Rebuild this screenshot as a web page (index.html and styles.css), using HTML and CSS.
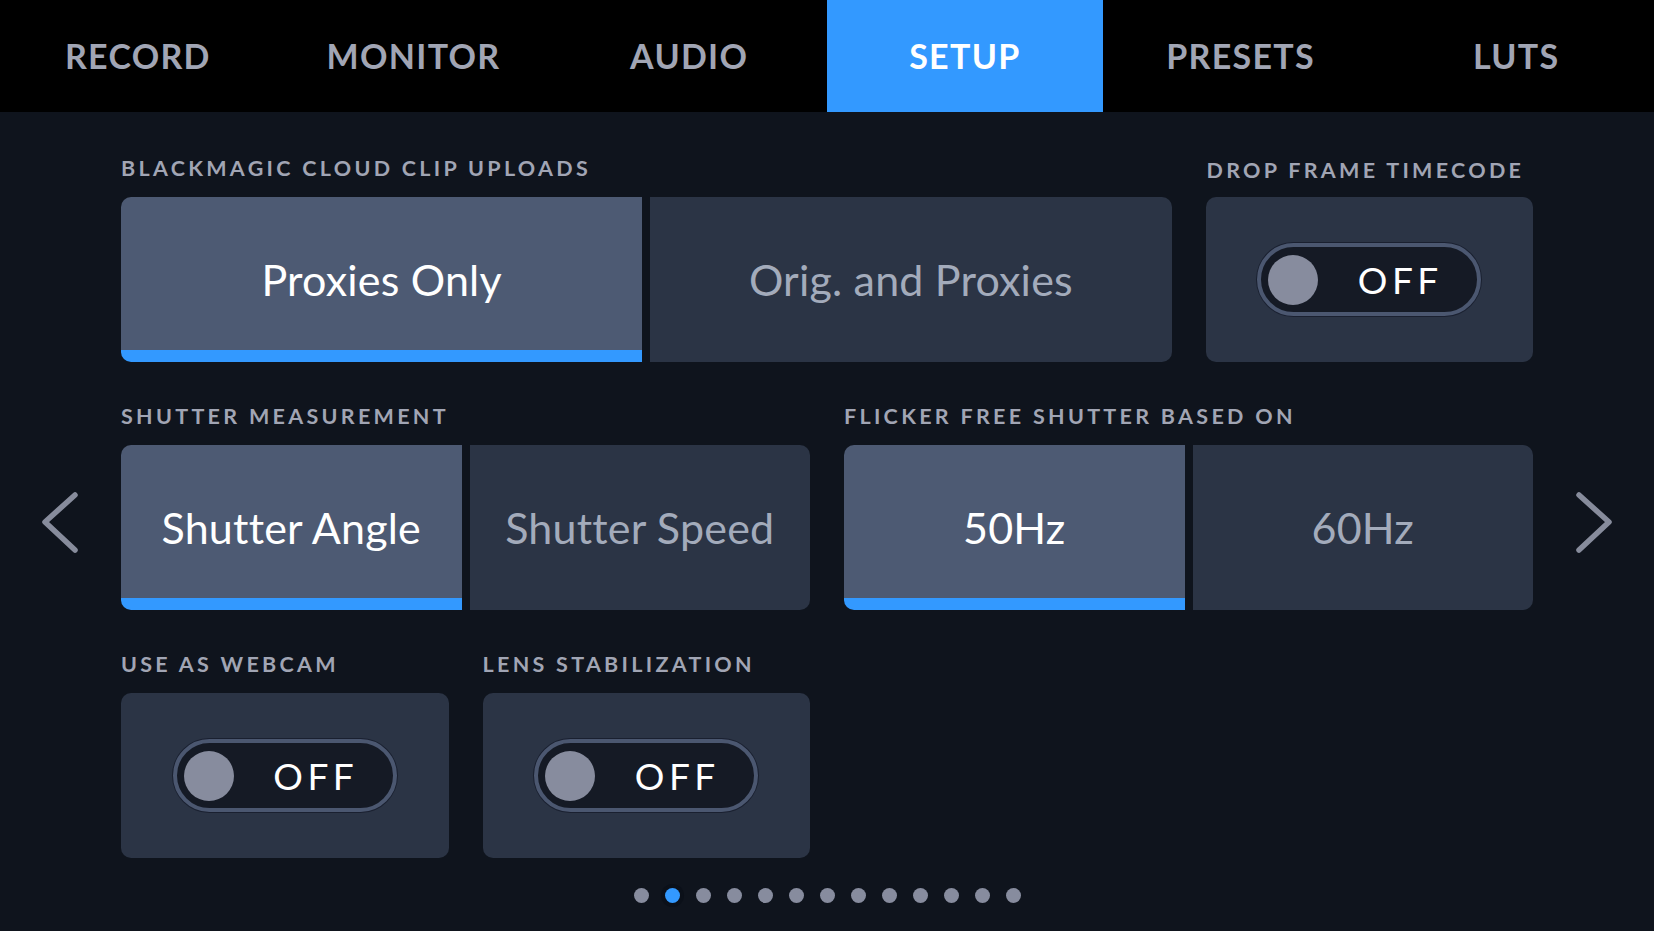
FILE: index.html
```html
<!DOCTYPE html>
<html>
<head>
<meta charset="utf-8">
<link rel="stylesheet" href="styles.css">
</head>
<body>
<header class="tabs">
  <div class="tab">RECORD</div>
  <div class="tab">MONITOR</div>
  <div class="tab">AUDIO</div>
  <div class="tab active">SETUP</div>
  <div class="tab">PRESETS</div>
  <div class="tab">LUTS</div>
</header>
<main class="main">
  <div class="nav nav-left">
    <svg width="40" height="65" viewBox="0 0 40 65"><path d="M35 5 L5 32 L35 60" fill="none" stroke="#878c9c" stroke-width="5.5" stroke-linecap="round" stroke-linejoin="round"/></svg>
  </div>
  <div class="grid">
    <section class="field span3">
      <div class="label">BLACKMAGIC CLOUD CLIP UPLOADS</div>
      <div class="seg">
        <div class="opt sel">Proxies Only</div>
        <div class="opt">Orig. and Proxies</div>
      </div>
    </section>
    <section class="field">
      <div class="label label-r">DROP FRAME TIMECODE</div>
      <div class="card">
        <div class="toggle"><span class="knob"></span><span class="tlabel">OFF</span></div>
      </div>
    </section>
    <section class="field span2">
      <div class="label">SHUTTER MEASUREMENT</div>
      <div class="seg">
        <div class="opt sel">Shutter Angle</div>
        <div class="opt">Shutter Speed</div>
      </div>
    </section>
    <section class="field span2">
      <div class="label">FLICKER FREE SHUTTER BASED ON</div>
      <div class="seg">
        <div class="opt sel">50Hz</div>
        <div class="opt">60Hz</div>
      </div>
    </section>
    <section class="field">
      <div class="label">USE AS WEBCAM</div>
      <div class="card">
        <div class="toggle"><span class="knob"></span><span class="tlabel">OFF</span></div>
      </div>
    </section>
    <section class="field">
      <div class="label">LENS STABILIZATION</div>
      <div class="card">
        <div class="toggle"><span class="knob"></span><span class="tlabel">OFF</span></div>
      </div>
    </section>
  </div>
  <div class="nav nav-right">
    <svg width="40" height="65" viewBox="0 0 40 65"><path d="M5 5 L35 32 L5 60" fill="none" stroke="#878c9c" stroke-width="5.5" stroke-linecap="round" stroke-linejoin="round"/></svg>
  </div>
</main>
<div class="dots">
  <span class="dot"></span>
  <span class="dot on"></span>
  <span class="dot"></span>
  <span class="dot"></span>
  <span class="dot"></span>
  <span class="dot"></span>
  <span class="dot"></span>
  <span class="dot"></span>
  <span class="dot"></span>
  <span class="dot"></span>
  <span class="dot"></span>
  <span class="dot"></span>
  <span class="dot"></span>
</div>
</body>
</html>
```

FILE: styles.css
```css
* { box-sizing: border-box; }
html, body {
  margin: 0;
  padding: 0;
}
body {
  width: 1654px;
  height: 931px;
  overflow: hidden;
  background: #0f141d;
  font-family: Lato, "Noto Sans", sans-serif;
  color: #fff;
}
.tabs {
  display: flex;
  height: 112px;
  background: #000;
}
.tab {
  flex: 1;
  display: flex;
  align-items: center;
  justify-content: center;
  font-size: 34px;
  font-weight: 700;
  letter-spacing: 1.3px;
  color: #a1a5b4;
  padding-bottom: 2px;
}
.tab.active {
  background: #3399ff;
  color: #fff;
}
.main {
  display: flex;
  padding-top: 46px;
}
.nav {
  width: 121px;
  flex: none;
  display: flex;
  padding-top: 332px;
}
.nav-left { justify-content: flex-start; padding-left: 40px; }
.nav-right { justify-content: flex-end; padding-right: 40px; }
.nav svg { display: block; }
.grid {
  width: 1412px;
  flex: none;
  display: grid;
  grid-template-columns: repeat(4, 1fr);
  column-gap: 34px;
  row-gap: 44px;
}
.span2 { grid-column: span 2; }
.span3 { grid-column: span 3; }
.label {
  height: 21px;
  font-size: 21.5px;
  line-height: 21px;
  font-weight: 700;
  letter-spacing: 3.3px;
  color: #a1a5b4;
  margin-bottom: 18px;
  white-space: nowrap;
}
.label-r { padding-left: 1px; padding-top: 2px; }
.seg {
  display: flex;
  gap: 8px;
  height: 165px;
}
.opt {
  flex: 1;
  display: flex;
  align-items: center;
  justify-content: center;
  background: #2b3445;
  color: #a3abbb;
  font-size: 43px;
  letter-spacing: 0.2px;
}
.opt:first-child { border-radius: 10px 0 0 10px; }
.opt:last-child { border-radius: 0 10px 10px 0; }
.opt.sel {
  background: #4d5a73;
  color: #fff;
  border-bottom: 12px solid #3399ff;
  padding-top: 12px;
}
.card {
  height: 165px;
  background: #2b3445;
  border-radius: 10px;
  display: flex;
  align-items: center;
  justify-content: center;
}
.toggle {
  width: 224px;
  height: 73px;
  border-radius: 37px;
  border: 4px solid #4b5770;
  background: #151a25;
  display: flex;
  align-items: center;
  padding-left: 7px;
  box-shadow: 0 0 0 1px #1a2030;
}
.knob {
  width: 50px;
  height: 50px;
  border-radius: 50%;
  background: #878c9e;
  flex: none;
}
.tlabel {
  flex: 1;
  text-align: center;
  font-size: 37px;
  letter-spacing: 4.5px;
  color: #fff;
  padding-left: 5px;
}
.dots {
  display: flex;
  justify-content: center;
  gap: 16px;
  margin-top: 30px;
}
.dot {
  width: 15px;
  height: 15px;
  border-radius: 50%;
  background: #878c9e;
}
.dot.on {
  background: #3399ff;
  box-shadow: 0 0 0 4px #0b1019;
}
```
